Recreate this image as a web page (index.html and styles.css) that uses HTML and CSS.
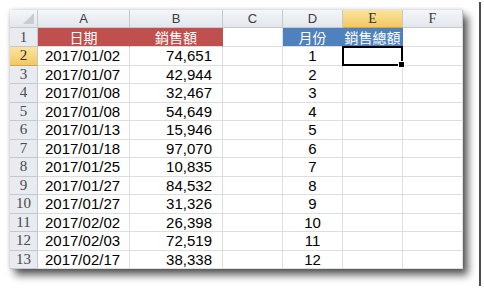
FILE: index.html
```html
<!DOCTYPE html>
<html lang="zh-Hant">
<head>
    <meta charset="UTF-8">
    <title>銷售額</title>
    <link rel="stylesheet" href="styles.css">
</head>
<body>
<div class="frame">
    <div class="sheet" id="sheet">
        <div class="hd corner"></div>
        <div class="hd col">A</div>
        <div class="hd col">B</div>
        <div class="hd col">C</div>
        <div class="hd col">D</div>
        <div class="hd col serif active">E</div>
        <div class="hd col serif">F</div>

        <div class="hd row">1</div>
        <div class="cell title red">日期</div>
        <div class="cell title red">銷售額</div>
        <div class="cell"></div>
        <div class="cell title blue">月份</div>
        <div class="cell title blue">銷售總額</div>
        <div class="cell"></div>
    </div>
</div>

<script>
    var data = [
        ["2017/01/02", "74,651"],
        ["2017/01/07", "42,944"],
        ["2017/01/08", "32,467"],
        ["2017/01/08", "54,649"],
        ["2017/01/13", "15,946"],
        ["2017/01/18", "97,070"],
        ["2017/01/25", "10,835"],
        ["2017/01/27", "84,532"],
        ["2017/01/27", "31,326"],
        ["2017/02/02", "26,398"],
        ["2017/02/03", "72,519"],
        ["2017/02/17", "38,338"]
    ];

    var sheet = document.getElementById("sheet");
    var html = "";
    for (var i = 0; i < data.length; i++) {
        var rowCls = i === 0 ? "hd row active" : "hd row";
        html += "<div class='" + rowCls + "'>" + (i + 2) + "</div>";
        html += "<div class='cell date'>" + data[i][0] + "</div>";
        html += "<div class='cell num'>" + data[i][1] + "</div>";
        html += "<div class='cell'></div>";
        html += "<div class='cell month'>" + (i + 1) + "</div>";
        html += "<div class='cell" + (i === 0 ? " selected" : "") + "'></div>";
        html += "<div class='cell'></div>";
    }
    sheet.insertAdjacentHTML("beforeend", html);
</script>
</body>
</html>
```

FILE: styles.css
```css
body {
    margin: 0;
    background-color: #ffffff;
    font-family: "Liberation Sans", "Noto Sans CJK TC", sans-serif;
}

/* 画像の外枠 */
.frame {
    width: 479px;
    height: 286px;
    box-shadow: 2px 2px 0 #4d4d4d;
    background-color: #ffffff;
    padding: 10px 0 0 10px;
    box-sizing: border-box;
}

.sheet {
    display: grid;
    grid-template-columns: 28px 92px 93px 60px 60px 60px 60px;
    grid-template-rows: 18px 19px repeat(12, 18.5px);
    width: 453px;
    background-color: #ffffff;
    box-shadow: 5px 6px 8px rgba(0, 0, 0, 0.65), 0 0 4px rgba(0, 0, 0, 0.2);
}

.sheet > div {
    box-sizing: border-box;
    border-right: 1px solid #dcdee0;
    border-bottom: 1px solid #dcdee0;
    display: flex;
    align-items: center;
    white-space: nowrap;
}

/* 見出し */
.hd {
    background: linear-gradient(#f4f6f8, #e3e7ec);
    color: #3c3c3c;
    justify-content: center;
    font-size: 13px;
}

.sheet > .hd {
    border-right: 1px solid #c4c9cf;
    border-bottom: 1px solid #c4c9cf;
}

.hd.row {
    background: #e8ebef;
    font-family: "Liberation Serif", serif;
    font-size: 15px;
    color: #4a4a4a;
}

.hd.serif {
    font-family: "Liberation Serif", serif;
    font-size: 14px;
}

.hd.active {
    background: linear-gradient(#fbe49e, #f2c862);
    color: #333333;
}

.sheet > .hd.active {
    border-bottom: 1px solid #d9a441;
}

.corner {
    position: relative;
}

.corner::after {
    content: "";
    position: absolute;
    right: 3px;
    bottom: 3px;
    border-left: 11px solid transparent;
    border-bottom: 11px solid #c9cdd2;
}

/* セル */
.cell {
    font-size: 15px;
    color: #000000;
}

.title {
    justify-content: center;
    color: #ffffff;
    font-size: 14px;
}

.sheet > .red {
    background-color: #c0504d;
    border-right-color: #c0504d;
}

.sheet > .blue {
    background-color: #4f81bd;
    border-right-color: #4f81bd;
}

.date {
    padding-left: 7px;
}

.num {
    justify-content: flex-end;
    padding-right: 10px;
}

.month {
    justify-content: center;
}

.selected {
    position: relative;
}

.selected::before {
    content: "";
    position: absolute;
    left: -1px;
    top: -1px;
    right: -1px;
    bottom: -1px;
    border: 2px solid #000000;
}

.selected::after {
    content: "";
    position: absolute;
    right: -3px;
    bottom: -3px;
    width: 5px;
    height: 5px;
    background-color: #000000;
    border: 1px solid #ffffff;
}
```
